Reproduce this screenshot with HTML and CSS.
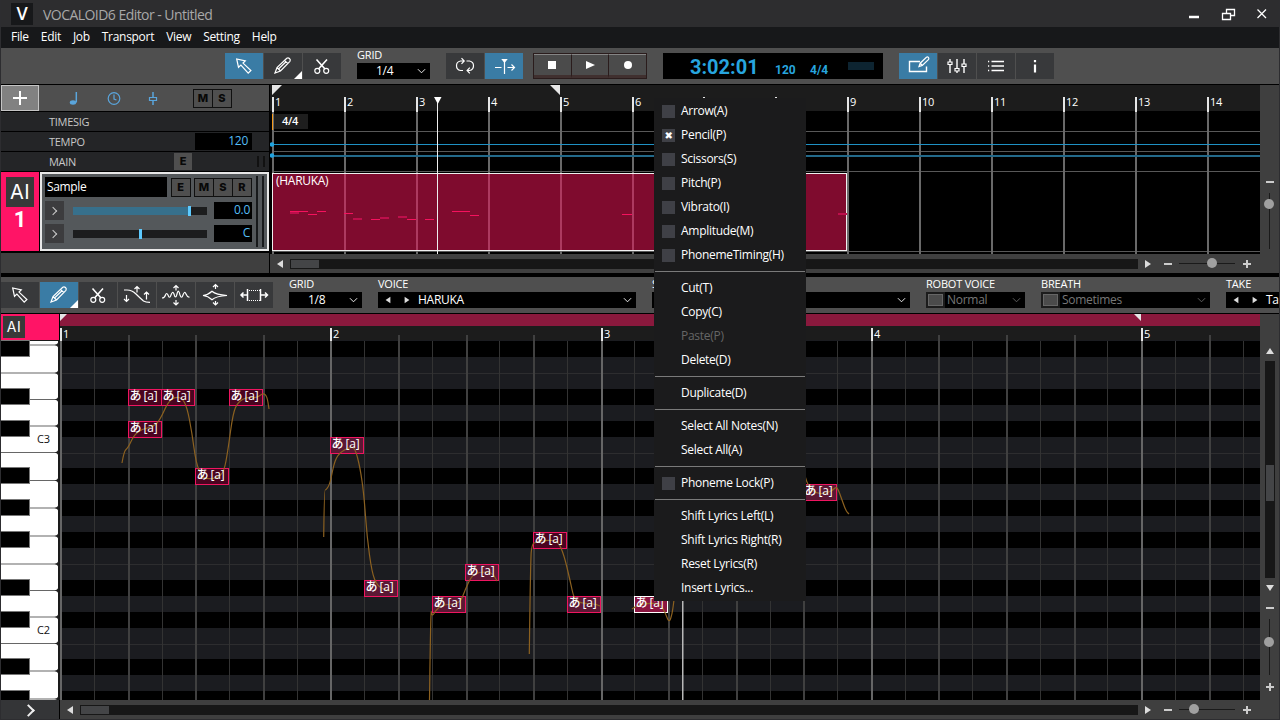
FILE: index.html
```html
<!DOCTYPE html>
<html lang="en">
<head>
    <meta charset="UTF-8">
    <title>VOCALOID6 Editor - Untitled</title>
    <link rel="stylesheet" href="styles.css">
</head>
<body>
    <svg width="0" height="0" class="defs">
        <symbol id="i-arrow" viewBox="0 0 38 26"><path d="M11.700 6l1.800 8.300 2.400-2.200 7.300 8 2.700-2.600-7.900-7.400 2.300-2.300z"/></symbol>
        <symbol id="i-pencil" viewBox="0 0 38 26"><path d="M11 20l2-5.500 9.800-9.300q1.300-1 2.700.3t.4 2.800L16.500 18z M13 14.500l3.500 3.500 M20.500 7.300l3.400 3.400 M15 15.500l7-6.700"/></symbol>
        <symbol id="i-scissors" viewBox="0 0 38 26"><path d="M13.500 6.500l8.500 9.500 M24 6.500l-8.500 9.500" stroke-width="1.600"/><circle cx="14.300" cy="17.800" r="2.500"/><circle cx="23.200" cy="17.800" r="2.500"/></symbol>
        <symbol id="i-caret" viewBox="0 0 10 6"><path d="M1 1l4 4 4-4"/></symbol>
    </svg>

    <div class="titlebar">
        <div class="app-icon">V</div>
        <div class="title">VOCALOID6 Editor - Untitled</div>
        <svg class="win-buttons" width="99" height="27">
            <path d="M9 17h10" stroke-width="2.500"/>
            <path d="M46.500 13v-3.500h8v6h-3.500 M42.500 13.500h8v6h-8z" stroke-width="1.300"/>
            <path d="M77.500 9.500l8.500 8.500 M86 9.500l-8.500 8.500" stroke-width="1.300"/>
        </svg>
    </div>
    <div class="menubar">
        <span>File</span><span>Edit</span><span>Job</span><span>Transport</span><span>View</span><span>Setting</span><span>Help</span>
    </div>

    <div class="toolbar main-tools">
        <div class="group">
            <div class="tool active"><svg><use href="#i-arrow"/></svg></div>
            <div class="tool more"><svg><use href="#i-pencil"/></svg></div>
            <div class="tool"><svg><use href="#i-scissors"/></svg></div>
        </div>
        <div class="field grid-field">
            <label>GRID</label>
            <div class="select center"><span>1/4</span><svg class="caret"><use href="#i-caret"/></svg></div>
        </div>
        <div class="group">
            <div class="tool"><svg><path d="M17 17.500h-2.500q-4-.8-4-4.800t4-4.700h3.500 M15.500 5.200l2.700 2.800-2.700 2.800 M20.500 8h3q4 .8 4 4.700t-4 4.800h-2.500 M23.800 14.700l-2.700 2.800 2.700 2.800"/></svg></div>
            <div class="tool active"><svg><path d="M10 14.500h6.500 M22.500 14.500h7 M26.500 11.500l3 3-3 3 M19.500 7v14"/><path d="M17.500 6.500h4l-2 2.500z" fill="#fff"/></svg></div>
        </div>
        <div class="transport">
            <div><i class="stop"></i></div>
            <div><i class="play"></i></div>
            <div><i class="rec"></i></div>
        </div>
        <div class="lcd"><b>3:02:01</b><span>120</span><span>4/4</span><i></i></div>
        <div class="group">
            <div class="tool active"><svg><path d="M21 8.500H10.500v10h17v-5" stroke-width="1.400"/><path d="M20 13.500l1.200-3.300 6.200-6q1.200-.6 2 .2t.2 2l-6.300 6z M21.500 10.500l1.800 1.900"/></svg></div>
            <div class="tool"><svg><path d="M12 6v3 M12 12v8 M19 6v9 M19 18v2 M26 6v5 M26 14v6" stroke-width="1.400"/><path d="M10 9h4v2.500h-4z M17 15.500h4v2.500h-4z M24 11h4v2.500h-4z"/></svg></div>
            <div class="tool"><svg><path d="M14.500 8.500H27 M14.500 13H27 M14.500 17.500H27 M11 8.500h1.200 M11 13h1.200 M11 17.500h1.200" stroke-width="1.400"/></svg></div>
            <div class="tool"><svg><path d="M19 11.500v8 M19 7v2.200" stroke-width="2.200"/></svg></div>
        </div>
    </div>

    <div class="arranger">
        <div class="tracks">
            <div class="track-head">
                <div class="add"></div>
                <svg width="120" height="26">
                    <ellipse cx="34" cy="17.500" rx="3.200" ry="2.200" fill="#5aa5dc" stroke="none"/>
                    <path d="M37.300 7v10.500" stroke-width="1.500"/>
                    <circle cx="75" cy="13.500" r="5.800"/><path d="M75 9.500v4.500l2.500 1"/>
                    <path d="M114 7v5 M114 16v4" stroke-width="1.500"/><path d="M110.500 12.500h7v3h-7z"/>
                </svg>
                <div class="ms"><b>M</b><b>S</b></div>
            </div>
            <div class="meta-row">TIMESIG</div>
            <div class="meta-row">TEMPO<span class="value tempo">120</span></div>
            <div class="meta-row">MAIN<div class="ms main-e"><b>E</b></div><i class="mini-meter"></i></div>
            <div class="track">
                <div class="track-id"><span class="ai">AI</span><strong>1</strong></div>
                <div class="track-panel">
                    <div class="controls">
                        <div class="line">
                            <div class="name">Sample</div>
                            <div class="ms"><b>E</b></div>
                            <div class="ms"><b>M</b><b>S</b><b>R</b></div>
                        </div>
                        <div class="line">
                            <div class="expand"></div>
                            <div class="slider volume"><i></i></div>
                            <span class="value">0.0</span>
                        </div>
                        <div class="line">
                            <div class="expand"></div>
                            <div class="slider pan"><i></i></div>
                            <span class="value">C</span>
                        </div>
                    </div>
                    <div class="meter"></div>
                    <div class="meter"></div>
                </div>
            </div>
            <div class="tracks-foot"></div>
        </div>
        <div class="timeline">
            <svg id="arrange" width="990" height="169" viewBox="270 85 990 169"></svg>
            <div class="hscroll">
                <i class="tri left"></i><div class="rail"><i></i></div><i class="tri right"></i>
                <div class="zoom"><i class="minus"></i><div class="zoom-line upper"><i></i></div><i class="plus"></i></div>
            </div>
        </div>
        <div class="side">
            <i class="minus"></i><div class="zoom-vline top"><i></i></div>
        </div>
    </div>

    <div class="toolbar edit-tools">
        <div class="group">
            <div class="tool"><svg><use href="#i-arrow"/></svg></div>
            <div class="tool active more"><svg><use href="#i-pencil"/></svg></div>
            <div class="tool"><svg><use href="#i-scissors"/></svg></div>
            <div class="tool"><svg><path d="M6 8h3q5 0 9 4t7.500 7q2 1.300 6.500 1.300 M8.500 13v6.500 M6 17l2.500 2.500 2.500-2.500 M19 4.500v6 M16.500 7L19 4.500l2.500 2.500 M28.500 10v7.500 M26 12.500l2.500-2.500 2.500 2.500"/></svg></div>
            <div class="tool"><svg><path d="M5 16q2.500 0 3.500-3t2.500 0q1.500 4.500 3 0t3-1q1.500 6 3 0t3 1q1.500 4.500 3 0t3-1 3.500 3"/><path d="M19 3.500v5 M16.500 6L19 3.500l2.500 2.500 M19 18v5 M16.500 20.500L19 23l2.500-2.500"/></svg></div>
            <div class="tool"><svg><path d="M7 13.500q5-.5 9-4.200 4 3.500 15 4.200-11 .7-15 4.200-4-3.700-9-4.200z"/><path d="M19.500 2.500v4.500 M17 5l2.500-2.500L22 5 M19.500 19v4 M17 20.500l2.500 2.500 2.500-2.500"/></svg></div>
            <div class="tool"><svg><path d="M12.500 7v12 M25.500 7v12 M6 13h6 M8.500 10.500L6 13l2.500 2.500 M26 13h6.500 M30 10.500l2.500 2.500-2.500 2.500" stroke-width="1.500"/><path d="M14 8.500h11 M14 18.500h11" stroke-dasharray="1 1"/></svg></div>
        </div>
        <div class="field grid-field">
            <label>GRID</label>
            <div class="select center"><span>1/8</span><svg class="caret"><use href="#i-caret"/></svg></div>
        </div>
        <div class="field voice">
            <label>VOICE</label>
            <div class="select"><i class="tri left"></i><i class="tri right"></i><span>HARUKA</span><svg class="caret"><use href="#i-caret"/></svg></div>
        </div>
        <div class="field style">
            <label>STYLE</label>
            <div class="select"><span></span><svg class="caret"><use href="#i-caret"/></svg></div>
        </div>
        <div class="field robot">
            <label>ROBOT VOICE</label>
            <div class="select off"><i class="check"></i><span>Normal</span><svg class="caret"><use href="#i-caret"/></svg></div>
        </div>
        <div class="field breath">
            <label>BREATH</label>
            <div class="select off"><i class="check"></i><span>Sometimes</span><svg class="caret"><use href="#i-caret"/></svg></div>
        </div>
        <div class="field take">
            <label>TAKE</label>
            <div class="select"><i class="tri left"></i><i class="tri right"></i><span>Take</span></div>
        </div>
    </div>

    <div class="editor">
        <div class="keyboard">
            <div class="part-id"><span class="ai">AI</span></div>
            <svg id="keys" width="59" height="360" viewBox="1 340 59 360"></svg>
            <div class="expand-foot"></div>
        </div>
        <div class="timeline">
            <svg id="roll" width="1200" height="386" viewBox="60 314 1200 386"></svg>
            <div class="hscroll">
                <i class="tri left"></i><div class="rail"><i></i></div><i class="tri right"></i>
                <div class="zoom"><i class="minus"></i><div class="zoom-line lower"><i></i></div><i class="plus"></i></div>
            </div>
        </div>
        <div class="side">
            <i class="tri up"></i><div class="vrail"><i></i></div><i class="tri down"></i>
            <i class="minus"></i><div class="zoom-vline bottom"><i></i></div><i class="plus"></i>
        </div>
    </div>

    <div class="context-menu">
        <div class="item check">Arrow(A)</div>
        <div class="item check on">Pencil(P)</div>
        <div class="item check">Scissors(S)</div>
        <div class="item check">Pitch(P)</div>
        <div class="item check">Vibrato(I)</div>
        <div class="item check">Amplitude(M)</div>
        <div class="item check">PhonemeTiming(H)</div>
        <hr>
        <div class="item">Cut(T)</div>
        <div class="item">Copy(C)</div>
        <div class="item disabled">Paste(P)</div>
        <div class="item">Delete(D)</div>
        <hr>
        <div class="item">Duplicate(D)</div>
        <hr>
        <div class="item">Select All Notes(N)</div>
        <div class="item">Select All(A)</div>
        <hr>
        <div class="item check">Phoneme Lock(P)</div>
        <hr>
        <div class="item">Shift Lyrics Left(L)</div>
        <div class="item">Shift Lyrics Right(R)</div>
        <div class="item">Reset Lyrics(R)</div>
        <div class="item">Insert Lyrics...</div>
    </div>

    <script>
        const rect = (x, y, w, h, fill, extra = '') =>
            `<rect x="${x}" y="${y}" width="${w}" height="${h}" fill="${fill}" ${extra}/>`;
        const blackRows = [341, 389, 421, 468, 500, 532, 580, 612, 659, 691];

        drawArrange();
        drawKeys();
        drawRoll();

        function drawArrange() {
            let s = rect(270, 85, 990, 26, '#1c1c1c');
            [131, 151, 171, 251].forEach(y => s += rect(272, y, 988, 1, '#585858'));

            // bars
            for (let i = 0; i < 14; i++) {
                const x = Math.round(272 + i * 71.9);
                s += rect(x, 111, 2, 143, '#696969');
                s += rect(x, 97, 2, 15, '#e6e6e6');
                // the open menu covers bars 7 and 8
                if (x < 654 || x > 806) {
                    s += `<text class="bar" x="${x + 3}" y="106">${i + 1}</text>`;
                }
            }

            // tempo and main volume lines
            s += rect(272, 144, 988, 1, '#1f91c4') + rect(272, 155, 988, 2, '#22698a');
            s += '<circle cx="272" cy="144.500" r="2.300" fill="#1fa3e0"/><circle cx="272" cy="155.500" r="2.300" fill="#1fa3e0"/>';
            s += rect(274, 114, 34, 15, '#1e1e1e') + rect(272, 114, 1, 16, '#f39a1e');
            s += '<text class="sig" x="282" y="125">4/4</text>';

            // part clip
            s += rect(272.5, 173.5, 574, 77, '#7f0b2e', 'stroke="#f0f0f0"');
            for (let i = 1; i < 8; i++) {
                s += rect(Math.round(272 + i * 71.9), 174, 2, 76, '#ad3a60');
            }
            s += '<text class="clip" x="276" y="185">(HARUKA)</text>';
            const bright = [[290, 211, 18], [308, 214, 9], [317, 211, 9], [344, 213, 9], [371, 219, 9],
                [407, 219, 9], [425, 219, 9], [452, 211, 18], [470, 215, 9], [622, 214, 10]];
            const dim = [[290, 212, 9], [353, 218, 9], [380, 217, 9], [398, 216, 9], [838, 213, 9]];
            bright.forEach(n => s += rect(n[0], n[1], n[2], 1, '#f5125e'));
            dim.forEach(n => s += rect(n[0], n[1], n[2], 2, '#bd0f4b'));

            // locators and playhead
            s += '<path d="M272 85h10l-10 10z M550 85h10v10z" fill="#e6e6e6"/>';
            s += rect(437, 100, 1, 154, '#eee') + '<path d="M434 97h7.500l-3.700 7z" fill="#fff"/>';
            document.getElementById('arrange').innerHTML = s;
        }

        function drawKeys() {
            let s = rect(1, 340, 59, 360, '#1a1a1a') + rect(1, 341, 57, 359, '#fff');
            [345, 373, 399.5, 426, 452.5, 480.5, 508, 536, 564, 590.5, 617, 643.5, 671, 699].forEach(y => {
                s += rect(1, y - .5, 57, 1, '#666');
                s += `<path d="M58.500 ${y - 4}q-.5 3.500-4 4 3.500 .5 4 4z" fill="#222"/>`;
            });
            blackRows.forEach(y =>
                s += rect(.5, y - .5, 29, 16, '#000', 'stroke="#777"'));
            s += '<text class="key" x="37" y="443">C3</text><text class="key" x="37" y="634">C2</text>';
            document.getElementById('keys').innerHTML = s;
        }

        function drawRoll() {
            let s = rect(60, 314, 1200, 12, '#8a193d') + rect(60, 326, 1200, 14, '#1c1c1c');
            s += rect(60, 340, 1200, 360, '#1b1c20');
            blackRows.forEach(y => s += rect(60, y, 1200, 16, '#000'));
            [373, 453, 564, 644].forEach(y => s += rect(60, y, 1200, 1, '#2d2d2f'));

            for (let i = 0; i < 36; i++) {
                const x = Math.round(60.2 + i * 33.78);
                if (i % 8 === 0) {
                    s += rect(x, 340, 2, 360, '#666');
                    s += rect(x, 328, 2, 13, '#e6e6e6');
                    s += `<text class="bar" x="${x + 3}" y="338">${i / 8 + 1}</text>`;
                } else if (i % 2 === 0) {
                    s += rect(x, 335, 2, 365, '#404040');
                } else {
                    s += rect(x, 341, 1, 359, '#333');
                }
            }
            s += '<path d="M60 314h7l-7 7z M1134 314h7v7z" fill="#e6e6e6"/>';

            // x, y, fill index: white row, black row, selected
            const notes = [[128, 389, 1], [161, 389, 1], [128, 421, 1], [195, 468, 1], [229, 389, 1],
                [330, 437, 0], [364, 580, 0], [432, 596, 0], [465, 564, 0], [533, 532, 1],
                [567, 596, 0], [634, 596, 2], [803, 484, 0]];
            const fills = ['#5b1834', '#4a0420', '#8a1540'];
            notes.forEach(([x, y, k]) => {
                s += rect(x + .5, y + .5, 33, 16, fills[k], `stroke="${k === 2 ? '#fff' : '#ee1560'}"`);
            });

            const curves = [
                [122, 463, 124, 451, 128, 448, 134, 435, 142, 429, 153, 427, 160, 420, 168, 402, 175, 397, 182, 398, 187, 407, 192, 433, 196, 463, 202, 477, 208, 479, 217, 478, 224, 472, 228, 450, 233, 413, 238, 402, 247, 397, 257, 398, 263, 393, 267, 396, 269, 409],
                [323.7, 537, 324.3, 490, 326, 490, 330, 484, 334, 463, 339, 453, 350, 447, 355, 448, 360, 467, 364, 495, 367, 537, 372, 573, 377, 585, 383, 589, 390, 591],
                [429.5, 700, 430.7, 607, 432, 617, 436, 610, 442, 605, 455, 604, 461, 601, 465, 590, 472, 575, 480, 572, 492, 572, 497, 581],
                [529.3, 654, 530.5, 560, 532, 544, 536, 542, 547, 540, 558, 541, 564, 555, 570, 580, 574, 599, 580, 603, 595, 604, 600, 606],
                [632, 609, 637, 605, 650, 603, 660, 604, 665, 612, 669, 623, 672, 615, 674, 600],
                [805, 476, 808, 487, 817, 494, 827, 493, 833, 490, 837, 486, 842, 500, 846, 511, 849, 514]
            ];
            curves.forEach(c => s += `<path class="pitch" d="${smooth(c)}"/>`);
            notes.forEach(([x, y]) => {
                s += `<text class="lyric" x="${x + 1.5}" y="${y + 11}">あ</text>`;
                s += `<text class="lyric" x="${x + 15.5}" y="${y + 11}">[a]</text>`;
            });
            s += rect(682, 340, 1.5, 360, '#b8b8b8');
            document.getElementById('roll').innerHTML = s;
        }

        // quadratic segments through the midpoints
        function smooth(c) {
            let d = `M${c[0]} ${c[1]}`;
            for (let i = 2; i < c.length - 2; i += 2) {
                d += `Q${c[i]} ${c[i + 1]} ${(c[i] + c[i + 2]) / 2} ${(c[i + 1] + c[i + 3]) / 2}`;
            }
            return d + `L${c[c.length - 2]} ${c[c.length - 1]}`;
        }
    </script>
</body>
</html>
```
FILE: styles.css
```css
* {
    margin: 0;
    padding: 0;
    box-sizing: border-box;
}

body {
    width: 1280px;
    height: 720px;
    overflow: hidden;
    position: relative;
    background: #000;
    border: solid #2d2d30;
    border-width: 0 1px 1px;
    color: #fff;
    font: 12px/16px "Open Sans", "Noto Sans", "Noto Sans CJK JP", sans-serif;
    letter-spacing: -0.28px;
}

svg {
    display: block;
    fill: none;
    stroke: #fff;
}

#arrange, #roll, #keys {
    stroke: none;
}

svg text {
    fill: #fff;
}

.defs {
    position: absolute;
}

/* title and menu */
.titlebar {
    height: 27px;
    display: flex;
    align-items: center;
    background: #2d2d2f;
    padding-left: 10px;
}

.app-icon {
    width: 22px;
    height: 22px;
    margin-top: 1px;
    background: #17181a;
    font: 600 18px/20px "Open Sans", sans-serif;
    text-align: center;
}

.title {
    margin: 3px 0 0 10px;
    font-size: 14px;
    letter-spacing: -0.54px;
    color: #a8a8a8;
}

.win-buttons {
    margin-left: auto;
}

.menubar {
    height: 21px;
    padding-left: 10px;
    display: flex;
    gap: 12px;
    background: #17181a;
    line-height: 20px;
    letter-spacing: -0.3px;
}

/* toolbars */
.toolbar {
    height: 36px;
    display: flex;
    gap: 16px;
    padding-top: 5px;
    background: #4f4f4f;
}

.main-tools {
    padding-left: 224px;
    margin-bottom: 1px;
}

.edit-tools {
    margin: 4px 0 1px;
    overflow: hidden;
}

.group {
    display: flex;
    gap: 1px;
}

.tool {
    width: 38px;
    height: 26px;
    background: #38393b;
    position: relative;
}

.tool svg {
    width: 38px;
    height: 26px;
    stroke-width: 1.2;
}

.tool.active {
    background: #3a7ca5;
}

.tool.more::after {
    content: "";
    position: absolute;
    right: 0;
    bottom: 0;
    border: 4px solid #fff;
    border-top-color: transparent;
    border-left-color: transparent;
}

.field {
    flex: none;
    margin-top: -5px;
}

.field label {
    display: block;
    height: 15px;
    line-height: 14px;
    font-size: 11px;
    letter-spacing: -0.2px;
}

.select {
    height: 16px;
    display: flex;
    align-items: center;
    background: #000;
    line-height: 16px;
    padding-right: 4px;
}

.select.center span {
    margin-left: 19px;
}

.grid-field {
    width: 73px;
}

.caret {
    width: 9px;
    height: 6px;
    margin-left: auto;
}

.voice, .style {
    width: 258px;
}

.robot {
    width: 99px;
}

.breath {
    width: 169px;
}

.take {
    width: 120px;
}

.select .tri.left {
    margin: 0 13px 0 7px;
}

.select .tri.right {
    margin-right: 8px;
}

.select .tri {
    transform: scale(0.8);
}

.off {
    color: #777;
}

.off .caret {
    stroke: #666;
}

.off .check {
    width: 19px;
    height: 16px;
    margin-right: 2px;
    border: 2px solid #1c1c1c;
    background: #4b4b4b;
    outline: 1px solid #666;
    outline-offset: -3px;
}

.transport {
    width: 114px;
    display: flex;
    margin-left: -6px;
    border: 1px solid #2a1c1c;
    height: 26px;
}

.transport div {
    flex: 1;
    display: flex;
    align-items: center;
    justify-content: center;
    border-top: 1px solid #858585;
    border-bottom: 3px solid #40302f;
    background: #4b4b4b;
}

.transport div + div {
    border-left: 1px solid #2a1c1c;
}

.transport .stop {
    width: 8px;
    height: 8px;
    background: #fff;
}

.transport .play {
    border: 4.5px solid transparent;
    border-left: 9px solid #fff;
    border-right: 0;
}

.transport .rec {
    width: 8px;
    height: 8px;
    border-radius: 50%;
    background: #fff;
}

.lcd {
    width: 220px;
    height: 26px;
    display: flex;
    align-items: baseline;
    padding-left: 27px;
    background: #000;
    color: #27a5df;
    letter-spacing: 0;
}

.lcd b {
    width: 85px;
    font: bold 20px/28px Roboto, sans-serif;
}

.lcd span {
    width: 35px;
    font: bold 12px/20px Roboto, sans-serif;
}

.lcd i {
    width: 26px;
    height: 8px;
    margin-left: 3px;
    align-self: center;
    background: #0d2431;
}

/* arranger */
.arranger {
    height: 188px;
    display: flex;
}

.tracks {
    width: 268px;
    margin-right: 1px;
    display: flex;
    flex-direction: column;
    gap: 1px;
}

.track-head {
    height: 26px;
    display: flex;
    align-items: center;
    background: #4f4f4f;
}

.track-head svg {
    stroke: #5aa5dc;
    stroke-width: 1.2;
}

.track-head .ms {
    margin-left: 34px;
}

.add {
    width: 38px;
    height: 26px;
    border: 1px solid #c4c4c4;
    background: linear-gradient(#fff, #fff) 50% 50% / 14px 2px no-repeat, linear-gradient(#fff, #fff) 50% 50% / 2px 14px no-repeat, #818181;
}

.ms {
    display: flex;
    flex: none;
    background: #4f4f4f;
    border: 1px solid #101010;
}

.ms b {
    width: 18px;
    height: 17px;
    font: 800 11px/17px Inter, sans-serif;
    color: #080808;
    text-align: center;
    letter-spacing: 0;
}

.ms b + b {
    border-left: 1px solid #101010;
    width: 19px;
}

.meta-row {
    height: 19px;
    display: flex;
    align-items: center;
    padding-left: 48px;
    background: #242527;
    color: #c8c8c8;
    font-size: 11px;
}

.value {
    width: 38px;
    height: 17px;
    padding-right: 2px;
    background: #000;
    color: #54bdf5;
    text-align: right;
    font-size: 12px;
    line-height: 15px;
}

.tempo {
    width: 57px;
    padding-right: 4px;
    margin-left: auto;
    margin-right: 17px;
}

.main-e {
    margin-left: auto;
    border-color: #242527;
}

.mini-meter {
    width: 8px;
    height: 11px;
    margin: 0 4px 0 64px;
    border: solid #111;
    border-width: 0 2px;
}

.track {
    height: 79px;
    display: flex;
    gap: 1px;
}

.track-id {
    width: 38px;
    display: flex;
    flex-direction: column;
    align-items: center;
    padding-top: 5px;
    background: #ff1466;
}

.ai {
    width: 28px;
    height: 30px;
    background: #393939;
    font: 20px/30px Inter, sans-serif;
    text-align: center;
    letter-spacing: 0.5px;
}

.track-id strong {
    font: bold 22px/26px Roboto, sans-serif;
}

.track-panel {
    flex: 1;
    display: flex;
    gap: 4px;
    padding: 3px;
    border: 2px solid #e8e8e8;
    background: #54585b;
}

.controls {
    width: 207px;
    display: flex;
    flex-direction: column;
    gap: 4px;
}

.line {
    display: flex;
    align-items: center;
    justify-content: space-between;
    height: 19px;
}

.line:first-child {
    height: 20px;
}

.name {
    width: 122px;
    height: 20px;
    padding-left: 2px;
    line-height: 20px;
    background: #000;
    letter-spacing: -0.35px;
}

.expand {
    width: 19px;
    height: 19px;
    background: #3c3c3e;
}

.expand::before {
    content: "";
    display: block;
    width: 5px;
    height: 5px;
    margin: 7px 0 0 5px;
    border: solid #ccc;
    border-width: 1px 1px 0 0;
    transform: rotate(45deg);
}

.slider {
    width: 134px;
    height: 8px;
    margin-left: 2px;
    background: #1c1d1e;
}

.slider i {
    display: block;
    width: 3px;
    height: 10px;
    background: #5dcaff;
    transform: translateY(-1px);
}

.volume {
    background: linear-gradient(90deg, #37708c 117px, #1c1d1e 117px);
}

.volume i {
    margin-left: 115px;
}

.pan i {
    margin-left: 66px;
}

.meter {
    width: 2px;
    height: 71px;
    margin-top: -1px;
    background: #17191b;
}

.tracks-foot {
    height: 20px;
    margin-top: 1px;
    background: #3f3f3f;
}

.timeline {
    flex: 1;
    min-width: 0;
}

.bar {
    font: 500 11px "Open Sans", sans-serif;
}

.sig {
    font-size: 11px;
    font-weight: 600;
}

.clip {
    font-size: 12px;
}

/* scroll bars */
.hscroll {
    height: 19px;
    display: flex;
    align-items: center;
    padding-left: 7px;
    background: #3f3f3f;
}

.rail {
    flex: 1;
    height: 10px;
    margin: 0 7px;
    padding: 1px;
    background: #171717;
}

.rail i {
    display: block;
    width: 28px;
    height: 8px;
    background: #444547;
}

.tri {
    display: block;
    flex: none;
    border: 4px solid transparent;
}

.tri.left {
    border-right: 6px solid #ddd;
    border-left: 0;
}

.tri.right {
    border-left: 6px solid #ddd;
    border-right: 0;
}

.tri.up {
    border-bottom: 6px solid #ddd;
    border-top: 0;
}

.tri.down {
    border-top: 6px solid #ddd;
    border-bottom: 0;
}

.zoom {
    width: 109px;
    display: flex;
    align-items: center;
    padding-left: 13px;
}

.minus, .plus {
    display: block;
    flex: none;
    width: 8px;
    height: 8px;
    background: linear-gradient(#ccc, #ccc) 50% 50% / 8px 2px no-repeat;
}

.plus {
    background: linear-gradient(#ccc, #ccc) 50% 50% / 8px 2px no-repeat, linear-gradient(#ccc, #ccc) 50% 50% / 2px 8px no-repeat;
}

.zoom-line {
    width: 56px;
    height: 1px;
    margin: 0 8px 0 7px;
    background: #1a1a1a;
}

.zoom-line i, .zoom-vline i {
    display: block;
    width: 10px;
    height: 10px;
    border-radius: 50%;
    background: #a0a0a0;
    transform: translateY(-5px);
}

.zoom-line.upper i {
    margin-left: 28px;
}

.zoom-line.lower i {
    margin-left: 10px;
}

.side {
    width: 19px;
    display: flex;
    flex-direction: column;
    align-items: center;
    background: #3f3f3f;
}

.arranger .side {
    padding-top: 93px;
}

.zoom-vline {
    width: 1px;
    height: 56px;
    background: #1a1a1a;
}

.zoom-vline i {
    margin-left: -5px;
}

.zoom-vline.top {
    margin-top: 7px;
    padding-top: 11px;
}

.zoom-vline.bottom {
    margin: 7px 0 8px;
    padding-top: 23px;
}

.editor .side {
    padding-top: 34px;
}

.vrail {
    width: 10px;
    height: 217px;
    margin: 7px 0;
    padding: 104px 1px 0;
    background: #171717;
}

.vrail i {
    display: block;
    height: 36px;
    background: #444547;
}

.tri.down {
    margin-bottom: 13px;
}

/* piano roll */
.editor {
    height: 405px;
    display: flex;
}

.keyboard {
    width: 59px;
}

.part-id {
    height: 26px;
    padding: 2px;
    background: #ff1466;
    border-right: 1px solid #000;
}

.part-id .ai {
    display: block;
    width: 22px;
    height: 22px;
    font-size: 14px;
    line-height: 22px;
}

.expand-foot {
    height: 19px;
    background: #343537;
    border-right: 1px solid #000;
    padding: 6px 0 0 23px;
}

.expand-foot::before {
    content: "";
    display: block;
    width: 7px;
    height: 7px;
    border: solid #eee;
    border-width: 2px 2px 0 0;
    transform: rotate(45deg);
}

svg .key {
    fill: #111;
    font-size: 11px;
}

.pitch {
    stroke: #8c6120;
    stroke-width: 1.2;
}

.lyric {
    font: 500 12px "Open Sans", "Noto Sans CJK JP", sans-serif;
    letter-spacing: -0.2px;
}

/* context menu */
.context-menu {
    position: absolute;
    left: 653px;
    top: 98px;
    width: 152px;
    height: 503px;
    padding-top: 1px;
    background: #1b1b1c;
}

.context-menu .item {
    height: 24px;
    display: flex;
    align-items: center;
    padding-left: 27px;
    white-space: nowrap;
}

.context-menu .item.check {
    padding-left: 8px;
}

.item.check::before {
    content: "";
    width: 13px;
    height: 13px;
    margin-right: 6px;
    background: #3f4046;
}

.item.check.on::before {
    content: "✖";
    font: bold 10px/13px "DejaVu Sans", sans-serif;
    text-align: center;
}

.context-menu .disabled {
    color: #666;
}

.context-menu hr {
    height: 1px;
    margin: 4px 1px;
    border: 0;
    background: #7a7a7a;
}
```
